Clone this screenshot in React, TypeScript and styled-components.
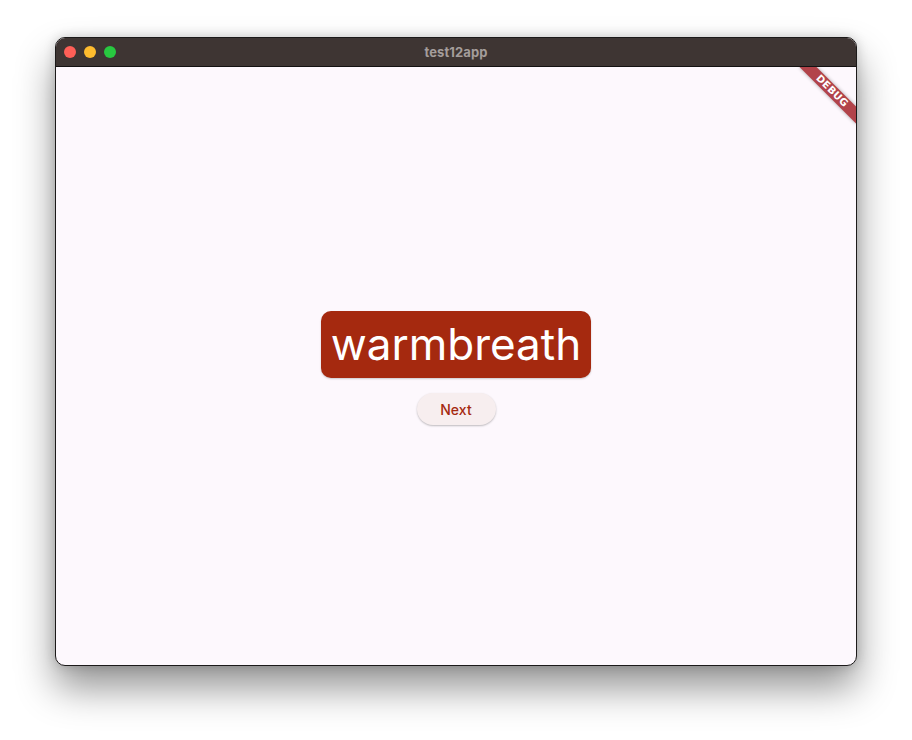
import React from "react";
import styled, { createGlobalStyle } from "styled-components";

const Global = createGlobalStyle`
  html, body { margin: 0; padding: 0; background: #ffffff; }
  body { font-family: Inter, "Noto Sans", sans-serif; }
`;

const Page = styled.div`
  width: 912px;
  height: 740px;
  box-sizing: border-box;
  padding: 37px 55px 74px 55px;
  display: flex;
  background: #ffffff;
`;

const Window = styled.div`
  flex: 1;
  display: flex;
  flex-direction: column;
  border: 1px solid #1c1a1a;
  border-radius: 10px;
  overflow: hidden;
  background: #fdf8fd;
  box-shadow: 0 22px 38px rgba(0, 0, 0, 0.42), 0 0 12px rgba(0, 0, 0, 0.18);
`;

const TitleBar = styled.div`
  position: relative;
  height: 28px;
  flex: none;
  background: #3e3533;
  border-bottom: 1px solid #141212;
  display: flex;
  align-items: center;
  justify-content: center;
`;

const Lights = styled.div`
  position: absolute;
  left: 8px;
  top: 8px;
  display: flex;
  gap: 8px;
`;

const Light = styled.span<{ $c: string }>`
  width: 12px;
  height: 12px;
  border-radius: 50%;
  background: ${(p) => p.$c};
`;

const Title = styled.span`
  font-family: Inter, "Liberation Sans", sans-serif;
  font-weight: 700;
  font-size: 13px;
  color: #a49d9b;
  letter-spacing: 0.1px;
`;

const Content = styled.div`
  position: relative;
  flex: 1;
  display: flex;
  flex-direction: column;
  align-items: center;
  justify-content: center;
  gap: 15px;
  padding-top: 4px;
  overflow: hidden;
`;

const Word = styled.div`
  background: #a5290f;
  color: #ffffff;
  border-radius: 10px;
  padding: 7px 10px 8px;
  font-family: Inter, sans-serif;
  font-size: 44px;
  line-height: 52px;
  font-weight: 400;
  box-shadow: 0 1px 2px rgba(0, 0, 0, 0.2);
`;

const NextButton = styled.button`
  width: 79px;
  height: 32px;
  border: none;
  border-radius: 16px;
  background: #f7eeef;
  color: #a5290f;
  font-family: Inter, sans-serif;
  font-size: 14px;
  font-weight: 500;
  letter-spacing: 0.1px;
  box-shadow: 0 1px 2px rgba(0, 0, 0, 0.25);
  cursor: pointer;
`;

const Ribbon = styled.div`
  position: absolute;
  top: 18px;
  right: -16px;
  width: 80px;
  height: 12px;
  transform: rotate(45deg);
  background: #b2434a;
  box-shadow: 0 0 4px rgba(0, 0, 0, 0.35);
  color: #ffffff;
  font-family: "DejaVu Sans", "Liberation Sans", sans-serif;
  font-weight: 900;
  font-size: 10px;
  line-height: 12px;
  text-align: center;
  letter-spacing: 0.3px;
`;

export default function App() {
  return (
    <>
      <Global />
      <Page>
        <Window>
          <TitleBar>
            <Lights>
              <Light $c="#fe5f57" />
              <Light $c="#febc2e" />
              <Light $c="#28c840" />
            </Lights>
            <Title>test12app</Title>
          </TitleBar>
          <Content>
            <Word>warmbreath</Word>
            <NextButton>Next</NextButton>
            <Ribbon>DEBUG</Ribbon>
          </Content>
        </Window>
      </Page>
    </>
  );
}
